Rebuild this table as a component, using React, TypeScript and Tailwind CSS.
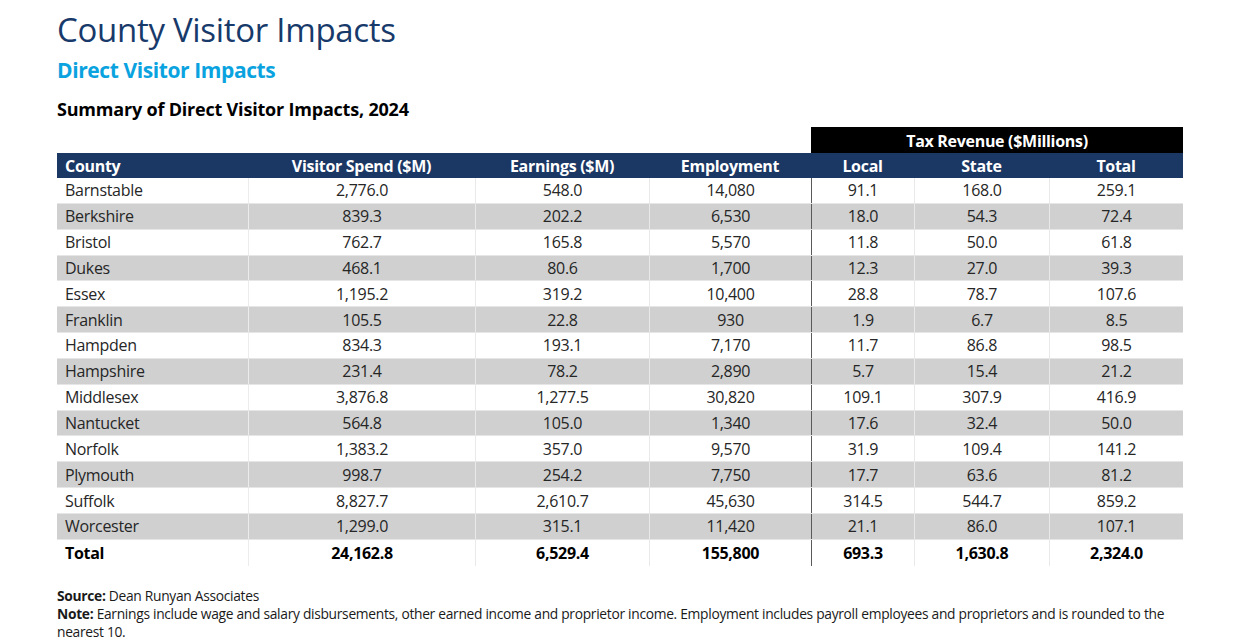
const rows = [
    ['Barnstable', '2,776.0', '548.0', '14,080', '91.1', '168.0', '259.1'],
    ['Berkshire', '839.3', '202.2', '6,530', '18.0', '54.3', '72.4'],
    ['Bristol', '762.7', '165.8', '5,570', '11.8', '50.0', '61.8'],
    ['Dukes', '468.1', '80.6', '1,700', '12.3', '27.0', '39.3'],
    ['Essex', '1,195.2', '319.2', '10,400', '28.8', '78.7', '107.6'],
    ['Franklin', '105.5', '22.8', '930', '1.9', '6.7', '8.5'],
    ['Hampden', '834.3', '193.1', '7,170', '11.7', '86.8', '98.5'],
    ['Hampshire', '231.4', '78.2', '2,890', '5.7', '15.4', '21.2'],
    ['Middlesex', '3,876.8', '1,277.5', '30,820', '109.1', '307.9', '416.9'],
    ['Nantucket', '564.8', '105.0', '1,340', '17.6', '32.4', '50.0'],
    ['Norfolk', '1,383.2', '357.0', '9,570', '31.9', '109.4', '141.2'],
    ['Plymouth', '998.7', '254.2', '7,750', '17.7', '63.6', '81.2'],
    ['Suffolk', '8,827.7', '2,610.7', '45,630', '314.5', '544.7', '859.2'],
    ['Worcester', '1,299.0', '315.1', '11,420', '21.1', '86.0', '107.1'],
]

const total = ['Total', '24,162.8', '6,529.4', '155,800', '693.3', '1,630.8', '2,324.0']

const headers = ['County', 'Visitor Spend ($M)', 'Earnings ($M)', 'Employment', 'Local', 'State', 'Total']

// column widths in px, left to right
const widths = ['w-[191px]', 'w-[227px]', 'w-[174px]', 'w-[162px]', 'w-[103px]', 'w-[135px]', 'w-[134px]']

function Cell({ value, idx, bold }: { value: string; idx: number; bold?: boolean }) {
    const first = idx === 0
    return (
        <div
            className={`${widths[idx]} h-full flex items-center shrink-0 ${first ? 'pl-2' : 'justify-center'} ${idx > 1 && idx !== 4 ? 'border-l border-[#e9e9e9]' : ''} ${idx === 1 ? 'border-l border-[#ececec]' : ''} ${idx === 4 ? 'border-l border-[#5a5a5a]' : ''} ${bold ? 'font-bold text-black' : ''}`}
        >
            {value}
        </div>
    )
}

export default function App() {
    return (
        <div className="w-[1240px] h-[644px] bg-white pl-[57px] pt-[10px] text-[#262626]" style={{ fontFamily: '"Open Sans", "Noto Sans", sans-serif' }}>
            <h1 className="text-[33px] leading-[40px] text-[#173a6b] tracking-[-0.3px]">County Visitor Impacts</h1>
            <h2 className="text-[21px] leading-[26px] font-bold text-[#0aa3e0] mt-[7px] tracking-[-0.4px]">Direct Visitor Impacts</h2>
            <h3 className="text-[18px] leading-[24px] font-bold text-black mt-[14px] tracking-[-0.2px]">Summary of Direct Visitor Impacts, 2024</h3>

            <div className="w-[1126px] mt-[6px] text-[16px] tracking-[-0.3px]">
                <div className="flex h-[26px]">
                    <div className="w-[754px]" />
                    <div className="w-[372px] bg-black text-white font-bold flex items-center justify-center pt-[2px]">Tax Revenue ($Millions)</div>
                </div>
                <div className="flex h-[25px] bg-[#1b3764] text-white font-bold">
                    {headers.map((h, i) => (
                        <div key={h} className={`${widths[i]} shrink-0 flex items-center pt-[1px] ${i === 0 ? 'pl-2' : 'justify-center'}`}>{h}</div>
                    ))}
                </div>
                {rows.map((r, ri) => (
                    <div key={r[0]} className={`flex h-[25.85px] border-b border-[#e6e6e6] ${ri % 2 === 1 ? 'bg-[#d0d0d0]' : 'bg-white'}`}>
                        {r.map((v, i) => (
                            <Cell key={i} value={v} idx={i} />
                        ))}
                    </div>
                ))}
                <div className="flex h-[26px]">
                    {total.map((v, i) => (
                        <Cell key={i} value={v} idx={i} bold />
                    ))}
                </div>
            </div>

            <div className="mt-[21px] text-[13.8px] leading-[18px] text-[#1a1a1a] tracking-[-0.3px]">
                <div><span className="font-bold">Source:</span> Dean Runyan Associates</div>
                <div className="whitespace-nowrap">
                    <span className="font-bold">Note:</span> Earnings include wage and salary disbursements, other earned income and proprietor income. Employment includes payroll employees and proprietors and is rounded to the
                </div>
                <div>nearest 10.</div>
            </div>
        </div>
    )
}
